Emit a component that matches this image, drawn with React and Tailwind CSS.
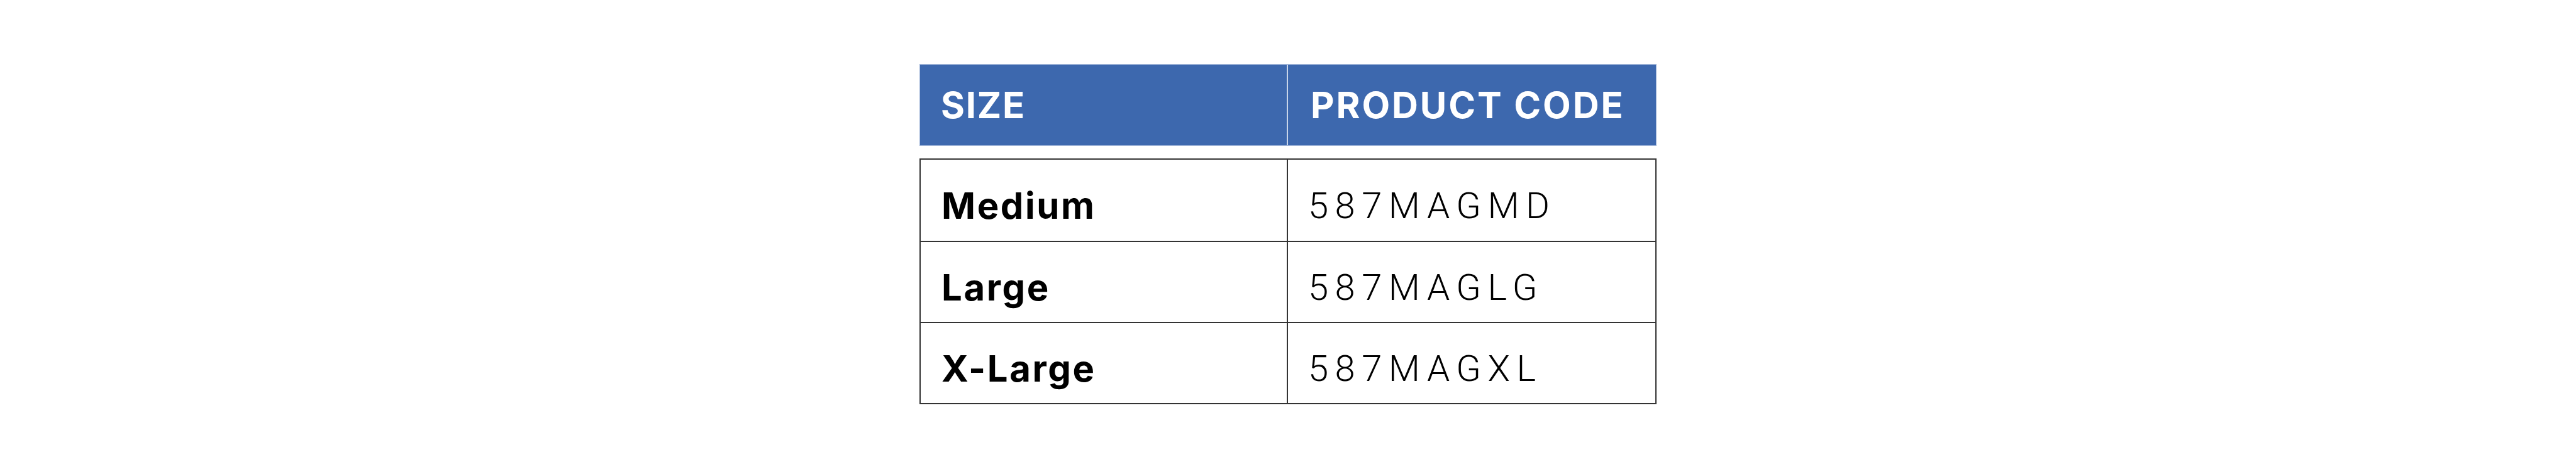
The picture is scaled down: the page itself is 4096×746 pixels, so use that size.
export default function App() {
  const rows = [
    ["Medium", "587MAGMD"],
    ["Large", "587MAGLG"],
    ["X-Large", "587MAGXL"],
  ];
  return (
    <div className="w-full h-[746px] bg-white flex justify-center pt-[102px]">
      <div className="w-[1172px] flex flex-col">
        <div className="h-[130px] bg-[#3d68ae] border border-[#9fb4d8] grid grid-cols-2">
          <div className="flex items-center pl-[33px] border-r-2 border-[#c9d5ea]">
            <span className="text-white text-[58px] font-bold leading-none tracking-[0.03em]" style={{ fontFamily: "Inter, 'Open Sans', sans-serif" }}>SIZE</span>
          </div>
          <div className="flex items-center pl-[36px]">
            <span className="text-white text-[58px] font-bold leading-none tracking-[0.05em]" style={{ fontFamily: "Inter, 'Open Sans', sans-serif" }}>PRODUCT CODE</span>
          </div>
        </div>
        <div className="mt-[20px] border-2 border-[#333333] flex flex-col">
          {rows.map(([s, c], i) => (
            <div key={s} className={"h-[129px] grid grid-cols-2 " + (i > 0 ? "border-t-2 border-[#333333]" : "")}>
              <div className="flex items-center pl-[33px] pt-[16px] border-r-2 border-[#333333]">
                <span className="text-black text-[58px] font-bold leading-none tracking-[0.045em]" style={{ fontFamily: "Inter, 'Open Sans', sans-serif" }}>{s}</span>
              </div>
              <div className="flex items-center pl-[32px] pt-[16px]">
                <span className="text-black text-[58px] font-light leading-none tracking-[0.18em]" style={{ fontFamily: "Roboto, 'Open Sans', sans-serif" }}>{c}</span>
              </div>
            </div>
          ))}
        </div>
      </div>
    </div>
  );
}
